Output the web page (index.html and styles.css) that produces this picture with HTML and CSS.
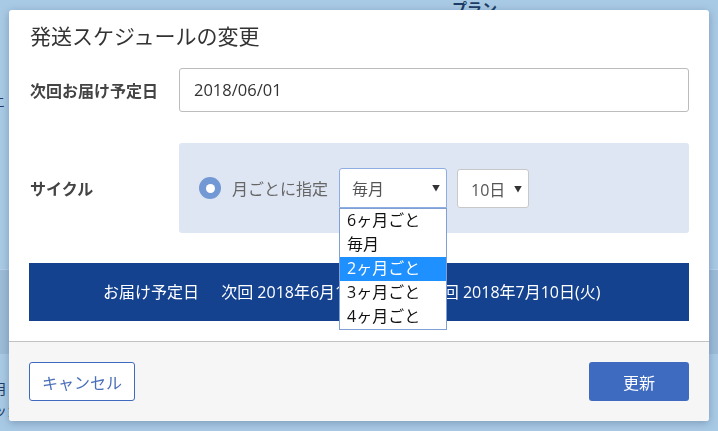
FILE: index.html
```html
<!DOCTYPE html>
<html lang="ja">
<head>
    <meta charset="UTF-8">
    <meta name="viewport" content="width=device-width, initial-scale=1.0">
    <title>発送スケジュールの変更</title>
<link rel="stylesheet" href="styles.css">
</head>
<body>
    <div class="page">
        <div class="page-top"><span class="page-plan">プラン</span></div>
        <div class="page-item">ェ</div>
        <div class="page-band"></div>
        <div class="page-foot">
            <span>月</span>
            <span>ッカ</span>
        </div>
    </div>

    <div class="modal">
        <h2 class="modal-title">発送スケジュールの変更</h2>

        <div class="row">
            <div class="row-label">次回お届け予定日</div>
            <div class="date-input">2018/06/01</div>
        </div>

        <div class="row row-cycle">
            <div class="row-label">サイクル</div>
            <div class="cycle-box">
                <span class="radio"></span>
                <span class="radio-text">月ごとに指定</span>
                <div class="select select-month">
                    <span>毎月</span><span class="arrow">▼</span>
                    <ul class="dropdown">
                        <li>6ヶ月ごと</li>
                        <li>毎月</li>
                        <li class="active">2ヶ月ごと</li>
                        <li>3ヶ月ごと</li>
                        <li>4ヶ月ごと</li>
                    </ul>
                </div>
                <div class="select select-day">
                    <span>10日</span><span class="arrow">▼</span>
                </div>
            </div>
        </div>

        <div class="banner">
            <span>お届け予定日</span>
            <span class="banner-dates">次回 2018年6月10日(日)　次々回 2018年7月10日(火)</span>
        </div>

        <div class="modal-footer">
            <button class="btn btn-cancel">キャンセル</button>
            <button class="btn btn-update">更新</button>
        </div>
    </div>
</body>
</html>
```

FILE: styles.css
```css
body {
    margin: 0;
    background-color: #a9cae5;
    font-family: 'Open Sans', 'Noto Sans CJK JP', sans-serif;
    height: 431px;
    overflow: hidden;
}

.page {
    height: 431px;
    color: #1d3c66;
}

.page-top {
    display: flex;
    height: 88px;
    padding-left: 452px;
}

.page-plan {
    margin-top: -2px;
    font-size: 15px;
    font-weight: bold;
    line-height: 20px;
}

.page-item {
    margin-left: -9px;
    font-size: 15px;
    line-height: 24px;
    height: 181px;
}

.page-band {
    height: 84px;
    background: #9dbcd8;
    border-top: 1px solid #b6d1e9;
}

.page-foot {
    display: flex;
    flex-direction: column;
    margin-left: -7px;
    padding-top: 24px;
    font-size: 14px;
    line-height: 22px;
}

.modal {
    position: fixed;
    top: 10px;
    left: 9px;
    width: 700px;
    height: 411px;
    background: #fff;
    border-radius: 3px;
    box-shadow: 0 2px 8px rgba(40, 70, 110, 0.35);
    display: flex;
    flex-direction: column;
}

.modal-title {
    margin: 12px 20px 18px 21px;
    font-size: 21px;
    line-height: 28px;
    font-weight: normal;
    color: #333;
}

.row {
    display: flex;
    align-items: center;
    padding: 0 20px;
}

.row-label {
    width: 150px;
    padding-left: 1px;
    box-sizing: border-box;
    font-size: 16px;
    font-weight: bold;
    color: #444;
}

.date-input {
    flex: 1;
    height: 44px;
    box-sizing: border-box;
    border: 1px solid #bcbcbc;
    border-radius: 3px;
    padding-left: 14px;
    font-size: 16.5px;
    line-height: 42px;
    color: #333;
}

.row-cycle {
    margin-top: 31px;
}

.cycle-box {
    flex: 1;
    height: 90px;
    box-sizing: border-box;
    background: #dfe6f3;
    border-radius: 3px;
    display: flex;
    align-items: center;
    padding: 0 20px;
}

.radio {
    width: 22px;
    height: 22px;
    border-radius: 50%;
    background: #7399d4;
    display: flex;
    align-items: center;
    justify-content: center;
}

.radio::after {
    content: "";
    width: 9px;
    height: 9px;
    border-radius: 50%;
    background: #fff;
}

.radio-text {
    margin-left: 11px;
    margin-right: 11px;
    font-size: 16px;
    color: #666;
}

.select {
    position: relative;
    height: 40px;
    box-sizing: border-box;
    background: #fff;
    border: 1px solid #c8c8c8;
    border-radius: 3px;
    display: flex;
    align-items: center;
    justify-content: space-between;
    font-size: 16px;
    color: #555;
}

.select-month {
    width: 108px;
    padding: 0 6px 0 12px;
    border-color: #8eaee3;
    border-radius: 3px 3px 0 0;
    margin-bottom: 1px;
}

.select-day {
    width: 72px;
    height: 39px;
    margin-left: 10px;
    padding: 0 6px 0 13px;
    margin-top: 1px;
}

.arrow {
    font-size: 8px;
    color: #333;
}

.dropdown {
    position: absolute;
    top: 39px;
    left: -1px;
    width: 108px;
    box-sizing: border-box;
    margin: 0;
    padding: 0;
    list-style: none;
    background: #fff;
    border: 1px solid #7f9fd5;
    z-index: 5;
}

.dropdown li {
    height: 24px;
    line-height: 23px;
    padding-left: 7px;
    font-size: 16px;
    color: #111;
}

.dropdown li.active {
    background: #1e90ff;
    color: #fff;
}

.banner {
    margin: 30px 20px 0;
    height: 58px;
    background: #14428f;
    color: #fff;
    font-size: 16px;
    line-height: 58px;
    padding-left: 74px;
}

.banner-dates {
    margin-left: 18px;
}

.modal-footer {
    margin-top: 20px;
    flex: 1;
    background: #f6f6f6;
    border-top: 1px solid #c2c2c2;
    border-radius: 0 0 3px 3px;
    display: flex;
    justify-content: space-between;
    align-items: flex-start;
    padding: 20px 20px 0;
}

.btn {
    height: 39px;
    border-radius: 3px;
    font-family: 'Open Sans', 'Noto Sans CJK JP', sans-serif;
    font-size: 16px;
    cursor: pointer;
}

.btn-cancel {
    width: 106px;
    background: #fff;
    border: 1px solid #3e6bbf;
    color: #4a6fba;
}

.btn-update {
    width: 100px;
    background: #3e6bc0;
    border: none;
    color: #fff;
}
```
